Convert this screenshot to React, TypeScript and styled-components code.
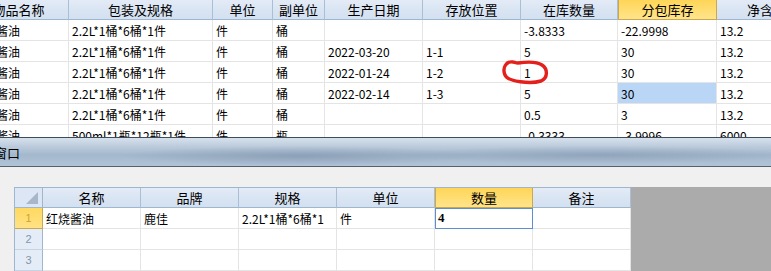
import styled, { createGlobalStyle } from "styled-components";

const GlobalStyle = createGlobalStyle`
  html, body {
    margin: 0;
    padding: 0;
    background: #f0f0f0;
  }
  body {
    font-family: "Noto Sans CJK SC", "DejaVu Sans", sans-serif;
    font-size: 12px;
    color: #000;
  }
`;

const topColumns = [
  { title: "物品名称", width: 100 },
  { title: "包装及规格", width: 144 },
  { title: "单位", width: 60 },
  { title: "副单位", width: 52 },
  { title: "生产日期", width: 98 },
  { title: "存放位置", width: 98 },
  { title: "在库数量", width: 97 },
  { title: "分包库存", width: 99, active: true },
  { title: "净含量", width: 100 },
];

const topRows = [
  ["红烧酱油", "2.2L*1桶*6桶*1件", "件", "桶", "", "", "-3.8333", "-22.9998", "13.2"],
  ["红烧酱油", "2.2L*1桶*6桶*1件", "件", "桶", "2022-03-20", "1-1", "5", "30", "13.2"],
  ["红烧酱油", "2.2L*1桶*6桶*1件", "件", "桶", "2022-01-24", "1-2", "1", "30", "13.2"],
  ["红烧酱油", "2.2L*1桶*6桶*1件", "件", "桶", "2022-02-14", "1-3", "5", "30", "13.2"],
  ["红烧酱油", "2.2L*1桶*6桶*1件", "件", "桶", "", "", "0.5", "3", "13.2"],
  ["红烧酱油", "500ml*1瓶*12瓶*1件", "件", "瓶", "", "", "-0.3333", "-3.9996", "6000"],
];

const bottomColumns = [
  { title: "名称" },
  { title: "品牌" },
  { title: "规格" },
  { title: "单位" },
  { title: "数量", active: true },
  { title: "备注" },
];

const bottomRows = [
  ["红烧酱油", "鹿佳", "2.2L*1桶*6桶*1", "件", "4", ""],
  ["", "", "", "", "", ""],
  ["", "", "", "", "", ""],
];

export default function App() {
  return (
    <>
      <GlobalStyle />
      <Screen>
        <TopGrid>
          <Sheet>
            <HeaderRow>
              {topColumns.map((c) => (
                <HeaderCell key={c.title} $w={c.width} $active={c.active}>
                  {c.title}
                </HeaderCell>
              ))}
            </HeaderRow>
            {topRows.map((row, r) => (
              <Row key={r}>
                {row.map((v, i) => (
                  <Cell key={i} $w={topColumns[i].width} $selected={r === 3 && i === 7}>
                    {v}
                  </Cell>
                ))}
              </Row>
            ))}
          </Sheet>
          {/* hand-drawn red circle around the stock count */}
          <Mark viewBox="0 0 56 34" width="56" height="34">
            <path
              d="M16 6 C9 5 5 12 8 19 C11 26 34 28 44 25 C51 22 51 13 45 9 C39 5 28 6 21 7 C19 7 17 6 16 6 Z"
              fill="none"
              stroke="#e3201c"
              strokeWidth="3.4"
              strokeLinecap="round"
              strokeLinejoin="round"
            />
          </Mark>
        </TopGrid>

        <TitleBar>
          <TitleText>窗口</TitleText>
        </TitleBar>

        <Panel>
          <Sheet $bordered>
            <HeaderRow>
              <Corner>
                <svg width="12" height="12" viewBox="0 0 12 12">
                  <polygon points="12,0 12,12 0,12" fill="#a7b6c8" />
                </svg>
              </Corner>
              {bottomColumns.map((c) => (
                <HeaderCell key={c.title} $w={98} $active={c.active}>
                  {c.title}
                </HeaderCell>
              ))}
            </HeaderRow>
            {bottomRows.map((row, r) => (
              <Row key={r}>
                <RowHeader $active={r === 0}>{r + 1}</RowHeader>
                {row.map((v, i) => (
                  <Cell key={i} $w={98} $focused={r === 0 && i === 4}>
                    {v}
                  </Cell>
                ))}
              </Row>
            ))}
          </Sheet>
          <Filler />
        </Panel>
      </Screen>
    </>
  );
}

const Screen = styled.div`
  width: 771px;
  height: 271px;
  overflow: hidden;
  display: flex;
  flex-direction: column;
`;

const TopGrid = styled.div`
  position: relative;
  height: 137px;
  flex-shrink: 0;
  overflow: hidden;
  background: #fff;
`;

const Sheet = styled.div<{ $bordered?: boolean }>`
  display: flex;
  flex-direction: column;
  margin-left: ${(p) => (p.$bordered ? "0" : "-31px")};
  background: #fff;
  border-top: ${(p) => (p.$bordered ? "1px solid #9eb6ce" : "none")};
  border-left: ${(p) => (p.$bordered ? "1px solid #9eb6ce" : "none")};
`;

const HeaderRow = styled.div`
  display: flex;
  height: 20px;
  flex-shrink: 0;
`;

const HeaderCell = styled.div<{ $w: number; $active?: boolean }>`
  box-sizing: border-box;
  width: ${(p) => p.$w}px;
  flex-shrink: 0;
  display: flex;
  align-items: center;
  justify-content: center;
  white-space: nowrap;
  font-size: 13px;
  background: ${(p) =>
    p.$active
      ? "linear-gradient(180deg, #ffd558 0%, #ffdd70 50%, #ffe48c 100%)"
      : "linear-gradient(180deg, #e3ebf6 0%, #dae5f3 50%, #d3e0f0 100%)"};
  border-right: 1px solid ${(p) => (p.$active ? "#c9a84f" : "#a9bfd6")};
  border-bottom: 1px solid ${(p) => (p.$active ? "#c9a84f" : "#9eb6ce")};
  border-left: ${(p) => (p.$active ? "1px solid #c9a84f" : "none")};
`;

const Row = styled.div`
  display: flex;
  height: 21px;
  flex-shrink: 0;
`;

const Cell = styled.div<{ $w: number; $selected?: boolean; $focused?: boolean }>`
  box-sizing: border-box;
  width: ${(p) => p.$w}px;
  flex-shrink: 0;
  display: flex;
  align-items: center;
  padding-left: 3px;
  white-space: nowrap;
  overflow: hidden;
  font-weight: ${(p) => (p.$focused ? "bold" : "normal")};
  font-family: ${(p) => (p.$focused ? '"Liberation Serif", serif' : "inherit")};
  font-size: ${(p) => (p.$focused ? "13px" : "12px")};
  background: ${(p) => (p.$selected ? "#bad6f6" : "#fff")};
  border-right: 1px solid #e4e4e4;
  border-bottom: 1px solid #e4e4e4;
  outline: ${(p) => (p.$focused ? "1px solid #5b8fcf" : "none")};
  outline-offset: -1px;
`;

const Corner = styled.div`
  box-sizing: border-box;
  width: 28px;
  flex-shrink: 0;
  display: flex;
  align-items: flex-end;
  justify-content: flex-end;
  padding: 0 4px 3px 0;
  background: #dce6f4;
  border-right: 1px solid #9eb6ce;
  border-bottom: 1px solid #9eb6ce;
`;

const RowHeader = styled.div<{ $active?: boolean }>`
  box-sizing: border-box;
  width: 28px;
  flex-shrink: 0;
  display: flex;
  align-items: center;
  justify-content: center;
  font-family: "Liberation Sans", sans-serif;
  font-size: 11px;
  color: ${(p) => (p.$active ? "#d6a12f" : "#8595a8")};
  background: ${(p) =>
    p.$active ? "linear-gradient(180deg, #ffd85f 0%, #ffe286 100%)" : "#e4ecf7"};
  border-right: 1px solid ${(p) => (p.$active ? "#c9a84f" : "#9eb6ce")};
  border-bottom: 1px solid ${(p) => (p.$active ? "#c9a84f" : "#c5d3e3")};
`;

const Mark = styled.svg`
  position: absolute;
  left: 497px;
  top: 56px;
  overflow: visible;
  z-index: 2;
`;

const TitleBar = styled.div`
  box-sizing: border-box;
  height: 30px;
  flex-shrink: 0;
  display: flex;
  align-items: center;
  border-top: 1px solid #3e4b5a;
  border-bottom: 1px solid #56606b;
  background:
    radial-gradient(ellipse 180px 10px at 300px 18px, rgba(120, 140, 165, 0.55), transparent),
    radial-gradient(ellipse 200px 9px at 600px 17px, rgba(125, 145, 170, 0.5), transparent),
    linear-gradient(180deg, #d6e1ec 0%, #bccbdc 30%, #a4b8cd 60%, #b1c3d6 100%);
  overflow: hidden;
`;

const TitleText = styled.span`
  margin-left: -6px;
  font-size: 13px;
  color: #000;
`;

const Panel = styled.div`
  flex: 1;
  display: flex;
  align-items: flex-start;
  padding: 20px 0 0 14px;
  background: #f0f0f0;
  overflow: hidden;
`;

const Filler = styled.div`
  flex: 1;
  align-self: stretch;
  background: #ababab;
`;
